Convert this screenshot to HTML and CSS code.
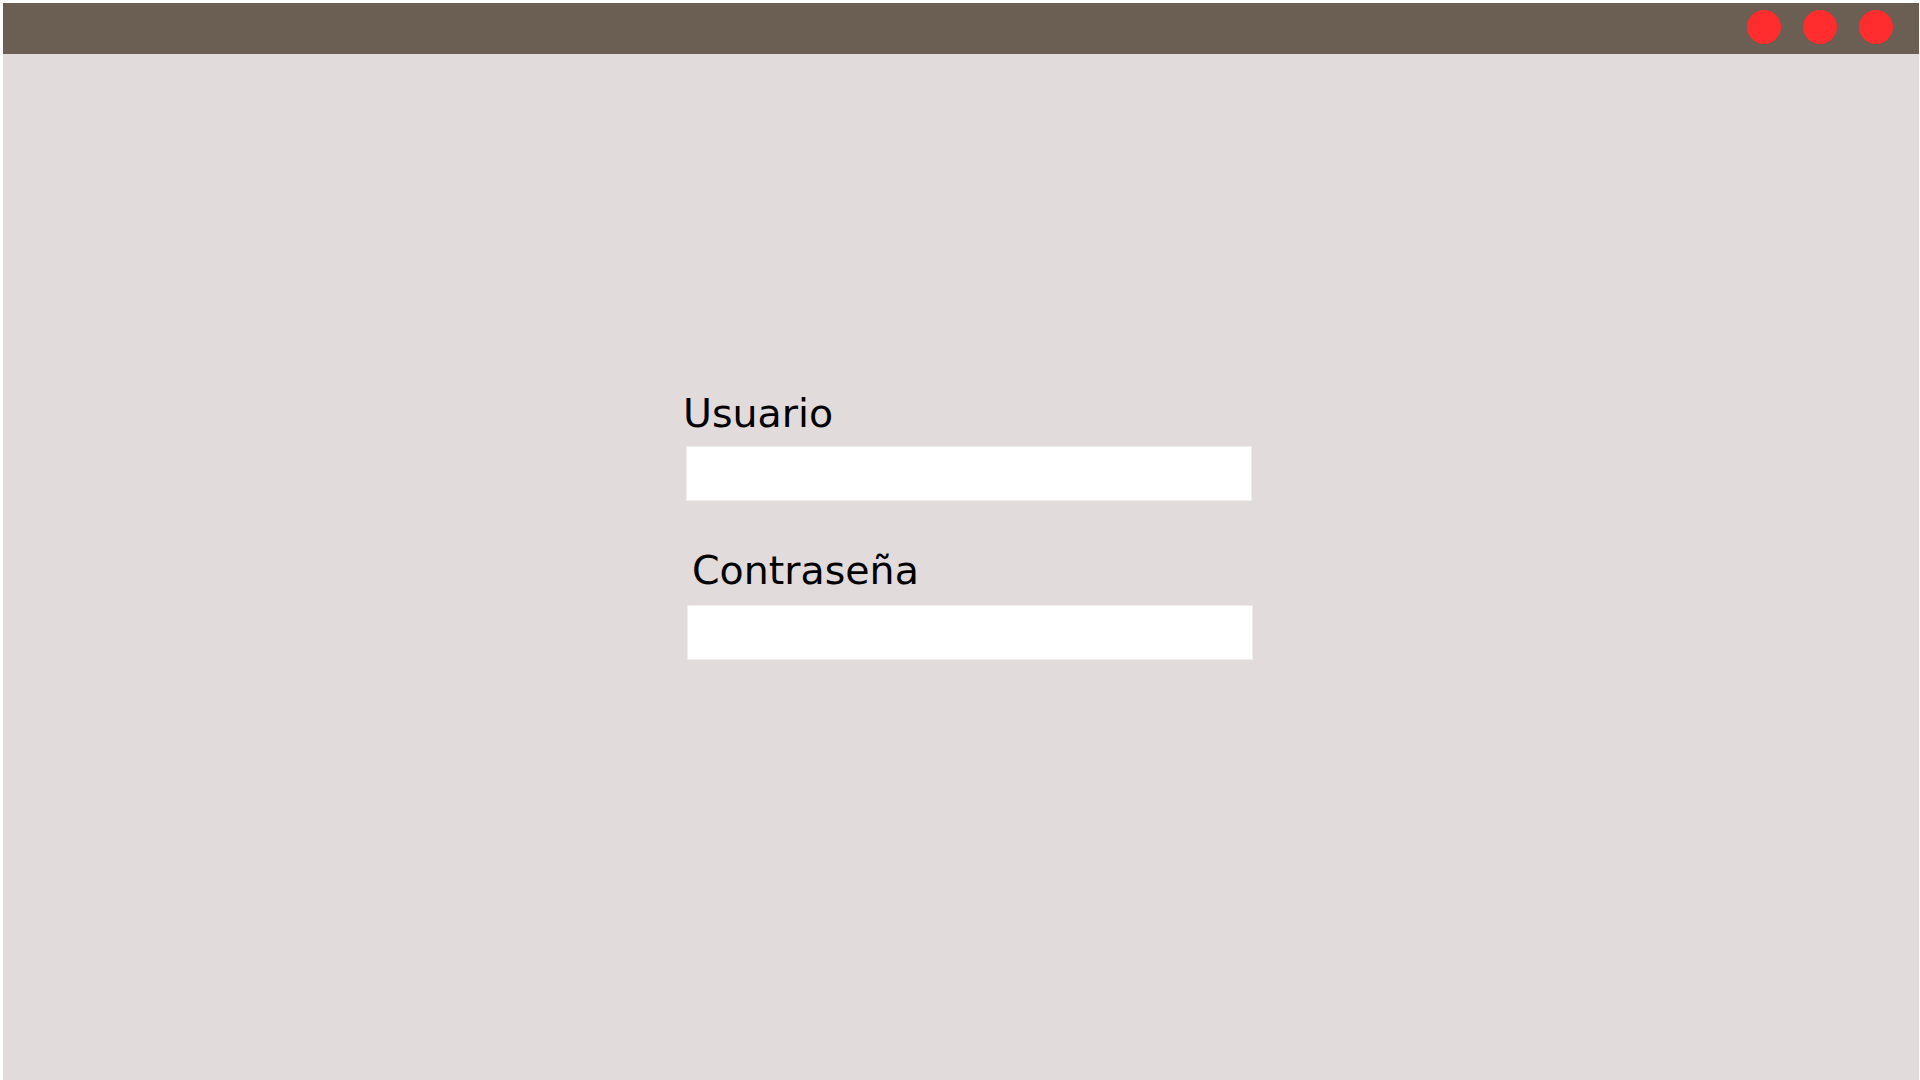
FILE: index.html
```html
<!DOCTYPE html>
<html lang="es">
<head>
<meta charset="utf-8">
<title>Login</title>
<link rel="stylesheet" href="styles.css">
</head>
<body>
<div class="window">
  <header class="titlebar">
    <span class="dot"></span>
    <span class="dot"></span>
    <span class="dot"></span>
  </header>
  <main class="content">
    <form class="login">
      <label class="label label-user" for="user">Usuario</label>
      <input class="field field-user" id="user" type="text">
      <label class="label label-pass" for="pass">Contraseña</label>
      <input class="field field-pass" id="pass" type="password">
    </form>
  </main>
</div>
</body>
</html>
```
FILE: styles.css
```css
html, body {
  margin: 0;
  padding: 0;
  background: #ffffff;
  height: 100%;
}
body {
  font-family: "DejaVu Sans", sans-serif;
  overflow: hidden;
}
.window {
  margin: 3px 1px 0 3px;
  height: calc(100% - 3px);
  background: #e2dbdc;
  display: flex;
  flex-direction: column;
}
.titlebar {
  height: 51px;
  background: #6b5e53;
  display: flex;
  justify-content: flex-end;
  align-items: center;
  gap: 22px;
  padding: 0 26px 3px 0;
  box-sizing: border-box;
  flex: none;
}
.dot {
  width: 34px;
  height: 34px;
  border-radius: 50%;
  background: #ff2d2d;
}
.content {
  flex: 1;
  padding: 336px 0 0 680px;
}
.login {
  display: flex;
  flex-direction: column;
  align-items: flex-start;
  margin: 0;
}
.label {
  font-size: 39.5px;
  line-height: 47px;
  color: #000;
}
.label-pass {
  margin-top: 46px;
  padding-left: 9px;
}
.field {
  width: 566px;
  height: 55px;
  box-sizing: border-box;
  border: 1px solid #f0ecec;
  background: #fff;
  margin: 9px 0 0 3px;
  padding: 0 10px;
  outline: none;
  font-size: 24px;
}
.field-pass {
  margin-top: 11px;
  margin-left: 4px;
}
```
